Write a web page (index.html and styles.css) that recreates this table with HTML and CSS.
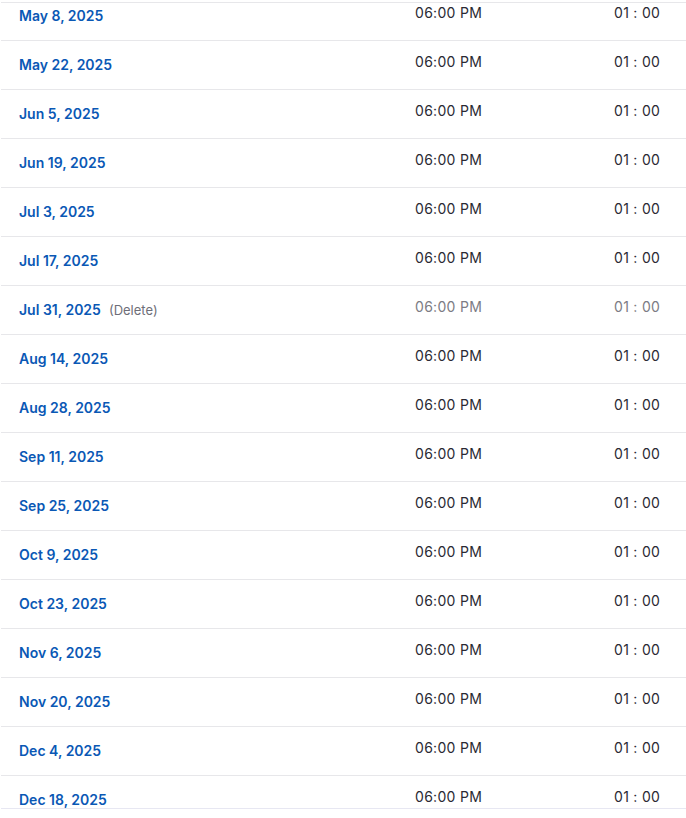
FILE: index.html
```html
<!DOCTYPE html>
<html lang="en">
<head>
<meta charset="utf-8">
<title>Schedule</title>
<link rel="stylesheet" href="styles.css">
</head>
<body>
<div class="schedule">
  <div class="list">
    <div class="row"><a class="date">May 8, 2025</a><span class="time">06:00 PM</span><span class="dur">01 : 00</span></div>
    <div class="row"><a class="date">May 22, 2025</a><span class="time">06:00 PM</span><span class="dur">01 : 00</span></div>
    <div class="row"><a class="date">Jun 5, 2025</a><span class="time">06:00 PM</span><span class="dur">01 : 00</span></div>
    <div class="row"><a class="date">Jun 19, 2025</a><span class="time">06:00 PM</span><span class="dur">01 : 00</span></div>
    <div class="row"><a class="date">Jul 3, 2025</a><span class="time">06:00 PM</span><span class="dur">01 : 00</span></div>
    <div class="row"><a class="date">Jul 17, 2025</a><span class="time">06:00 PM</span><span class="dur">01 : 00</span></div>
    <div class="row row-off"><span class="date-cell"><a class="date">Jul 31, 2025</a><span class="del">(Delete)</span></span><span class="time">06:00 PM</span><span class="dur">01 : 00</span></div>
    <div class="row"><a class="date">Aug 14, 2025</a><span class="time">06:00 PM</span><span class="dur">01 : 00</span></div>
    <div class="row"><a class="date">Aug 28, 2025</a><span class="time">06:00 PM</span><span class="dur">01 : 00</span></div>
    <div class="row"><a class="date">Sep 11, 2025</a><span class="time">06:00 PM</span><span class="dur">01 : 00</span></div>
    <div class="row"><a class="date">Sep 25, 2025</a><span class="time">06:00 PM</span><span class="dur">01 : 00</span></div>
    <div class="row"><a class="date">Oct 9, 2025</a><span class="time">06:00 PM</span><span class="dur">01 : 00</span></div>
    <div class="row"><a class="date">Oct 23, 2025</a><span class="time">06:00 PM</span><span class="dur">01 : 00</span></div>
    <div class="row"><a class="date">Nov 6, 2025</a><span class="time">06:00 PM</span><span class="dur">01 : 00</span></div>
    <div class="row"><a class="date">Nov 20, 2025</a><span class="time">06:00 PM</span><span class="dur">01 : 00</span></div>
    <div class="row"><a class="date">Dec 4, 2025</a><span class="time">06:00 PM</span><span class="dur">01 : 00</span></div>
    <div class="row"><a class="date">Dec 18, 2025</a><span class="time">06:00 PM</span><span class="dur">01 : 00</span></div>
  </div>
</div>
</body>
</html>
```
FILE: styles.css
```css
html, body {
  margin: 0;
  padding: 0;
  background: #ffffff;
}
body {
  font-family: Inter, "Noto Sans", "Liberation Sans", sans-serif;
  font-size: 14px;
  color: #2a2a33;
}
.schedule {
  margin: 2px 0 0 1px;
  height: 805px;
  border-top: 1px solid #e7e7ea;
  border-bottom: 1px solid #e7e7f2;
  overflow: hidden;
}
.list {
  margin-top: -11px;
}
.row {
  display: grid;
  grid-template-columns: 396px 199px auto;
  align-items: start;
  height: 48px;
  padding-left: 18px;
  border-bottom: 1px solid #e7e7ea;
  line-height: 17px;
}
.date-cell {
  display: flex;
  align-items: baseline;
  gap: 8px;
}
.date {
  padding-top: 15px;
  color: #0a58b5;
  font-weight: 600;
  text-decoration: none;
}
.del {
  font-size: 13px;
  color: #6e6e78;
}
.time, .dur {
  padding-top: 12px;
  color: #2a2a33;
  letter-spacing: 0.3px;
}
.row-off .time, .row-off .dur {
  color: #7c7c84;
}
```
